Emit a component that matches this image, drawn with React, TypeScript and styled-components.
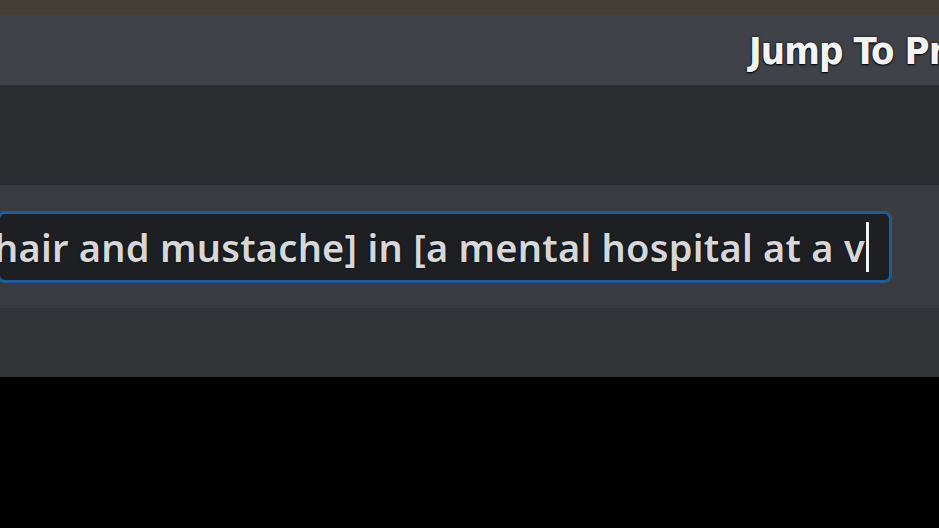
import React from "react";
import styled, { createGlobalStyle } from "styled-components";

const Global = createGlobalStyle`
  html, body { margin: 0; padding: 0; background: #000; }
  body { width: 939px; height: 528px; overflow: hidden; }
  #root { width: 939px; height: 528px; }
`;

const Screen = styled.div`
  display: flex;
  width: 939px;
  height: 528px;
  background: #000;
`;

const Main = styled.div`
  flex: 0 0 936px;
  display: flex;
  flex-direction: column;
`;

const Edge = styled.div`
  flex: 1;
  display: flex;
  flex-direction: column;
  justify-content: flex-end;
`;

const EdgeLine = styled.div`
  width: 1px;
  height: 65px;
  background: #262626;
`;

const TopBand = styled.div`
  height: 15px;
  background: #433f37;
`;

const Header = styled.div`
  height: 70px;
  background: #404249;
  display: flex;
  justify-content: flex-start;
  align-items: center;
  padding-left: 749px;
  overflow: hidden;
`;

const HeaderTitle = styled.span`
  font-family: "DejaVu Sans Condensed", "DejaVu Sans", sans-serif;
  font-weight: 700;
  font-size: 38px;
  letter-spacing: -0.9px;
  color: #f2f3f5;
  white-space: nowrap;
  text-shadow: 0 0 2px #000, 0 1px 2px #000;
  margin-top: 2px;
`;

const Gap = styled.div`
  height: 100px;
  background: #2b2d31;
`;

const Composer = styled.div`
  height: 123px;
  background: #393b41;
  display: flex;
  align-items: flex-start;
  padding-top: 26px;
  box-sizing: border-box;
`;

const InputBox = styled.div`
  width: 895px;
  margin-left: -3px;
  height: 72px;
  box-sizing: border-box;
  border: 3px solid #1d5d97;
  border-radius: 8px;
  background: #1e1f22;
  display: flex;
  justify-content: flex-end;
  align-items: center;
  overflow: hidden;
  padding-right: 20px;
`;

const InputText = styled.span`
  flex-shrink: 0;
  font-family: "Noto Sans", sans-serif;
  font-size: 38px;
  font-weight: 600;
  letter-spacing: 0.25px;
  color: #d6d7da;
  white-space: nowrap;
  text-shadow: 0 0 2px #000;
`;

const Caret = styled.span`
  flex-shrink: 0;
  width: 3px;
  height: 50px;
  background: #f2f2f2;
  margin-left: 1px;
`;

const Footer = styled.div`
  height: 69px;
  background: #333438;
`;

export default function App() {
  return (
    <>
      <Global />
      <Screen>
        <Main>
          <TopBand />
          <Header>
            <HeaderTitle>Jump To Present</HeaderTitle>
          </Header>
          <Gap />
          <Composer>
            <InputBox>
              <InputText>
                Keanu Reeves with [long hair and mustache] in [a mental hospital at a v
              </InputText>
              <Caret />
            </InputBox>
          </Composer>
          <Footer />
        </Main>
        <Edge>
          <EdgeLine />
        </Edge>
      </Screen>
    </>
  );
}
